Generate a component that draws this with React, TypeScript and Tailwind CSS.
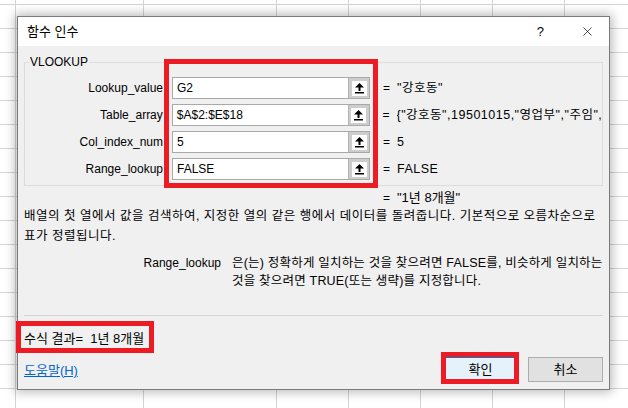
import { X } from 'lucide-react';

const COLS = ['w-[16px]', 'w-[128px]', 'w-[133px]', 'w-[72px]', 'w-[72px]', 'w-[72px]', 'w-[72px]', 'w-[72px]'];

const ARGS = [
  { name: 'Lookup_value', input: 'G2', value: '"강호동"' },
  { name: 'Table_array', input: '$A$2:$E$18', value: '{"강호동",19501015,"영업부","주임",' },
  { name: 'Col_index_num', input: '5', value: '5' },
  { name: 'Range_lookup', input: 'FALSE', value: 'FALSE' },
];

function SheetGrid() {
  return (
    <div className="flex flex-col">
      {Array.from({ length: 18 }).map((_, r) => (
        <div key={r} className={`flex shrink-0 ${r === 0 ? 'h-[5px]' : 'h-[24px]'}`}>
          {COLS.map((w, c) => (
            <div key={c} className={`${w} shrink-0 border-r border-b border-[#d4d4d4]`} />
          ))}
        </div>
      ))}
    </div>
  );
}

function CollapseButton() {
  return (
    <div className="w-[21px] h-full bg-[#cdcdcd] flex items-center justify-center border-l border-[#b4b4b4]">
      <div className="w-[15px] h-[15px] bg-white flex items-center justify-center">
        <svg width="11" height="12" viewBox="0 0 11 12">
          <polygon points="5.5,1 1,5.5 4.5,5.5 4.5,9 6.5,9 6.5,5.5 10,5.5" fill="#000" />
          <rect x="1" y="10" width="9" height="1.5" fill="#000" />
        </svg>
      </div>
    </div>
  );
}

function ArgRow({ name, input, value }: { name: string; input: string; value: string }) {
  return (
    <div className="flex items-center h-[22px]">
      <div className="w-[138px] text-right">{name}</div>
      <div className="ml-[9px] w-[198px] h-[22px] flex border border-[#a9a9a9] bg-white">
        <div className="flex-1 pl-[4px] leading-[20px]">{input}</div>
        <CollapseButton />
      </div>
      <div className="ml-[13px] w-[14px]">=</div>
      <div className="whitespace-nowrap overflow-hidden text-[12.5px] tracking-[0.5px]">{value}</div>
    </div>
  );
}

export default function App() {
  return (
    <div className="relative w-[628px] h-[408px] overflow-hidden bg-white text-[12px] text-black font-['Liberation_Sans','Noto_Sans_CJK_KR',sans-serif]">
      <SheetGrid />

      {/* dialog */}
      <div className="absolute left-[17px] top-[16px] w-[593px] h-[374px] flex flex-col border border-[#7a7a7a] bg-[#f0f0f0] shadow-[0_0_10px_2px_rgba(0,0,0,0.28)]">
        <div className="h-[29px] shrink-0 bg-white flex items-center pl-[9px]">
          <span className="text-[13px] leading-[16px]">함수 인수</span>
          <span className="ml-auto mr-[36px] text-[13px] leading-[16px]">?</span>
          <X size={15} strokeWidth={1.1} className="mr-[14px]" />
        </div>

        <div className="flex-1 flex flex-col px-[6px]">
          {/* group box */}
          <div className="relative mt-[16px] border border-[#dcdcdc] pt-[14px] pb-[5px]">
            <span className="absolute -top-[9px] left-[4px] px-[1px] bg-[#f0f0f0] leading-[16px]">VLOOKUP</span>
            <div className="flex flex-col gap-[5px]">
              {ARGS.map(a => <ArgRow key={a.name} {...a} />)}
            </div>
          </div>

          <div className="mt-[4px] flex leading-[16px] pl-[359px] text-[13px]">
            <span className="w-[14px] text-[12px]">=</span>
            <span>"1년 8개월"</span>
          </div>

          <p className="leading-[20px] text-[12.5px] tracking-[0.5px] whitespace-nowrap">
            배열의 첫 열에서 값을 검색하여, 지정한 열의 같은 행에서 데이터를 돌려줍니다. 기본적으로 오름차순으로
            <br />
            표가 정렬됩니다.
          </p>

          <div className="mt-[8px] flex leading-[18px]">
            <div className="w-[197px] text-right">Range_lookup</div>
            <p className="ml-[11px] text-[12.5px] tracking-[0.2px] whitespace-nowrap">
              은(는) 정확하게 일치하는 것을 찾으려면 FALSE를, 비슷하게 일치하는
              <br />
              것을 찾으려면 TRUE(또는 생략)를 지정합니다.
            </p>
          </div>

          <div className="mt-[25px] border-t border-[#d5d5d5]" />

          <div className="mt-[15px] leading-[16px] whitespace-pre text-[13px]">수식 결과=  1년 8개월</div>

          <div className="mt-[10px] flex items-center">
            <a className="text-[#0066cc] underline leading-[16px] pt-[2px] text-[13px]">도움말(H)</a>
            <div className="ml-auto flex gap-[10px] text-[13px]">
              <button className="w-[75px] h-[25px] bg-[#e5f1fb] border border-[#0078d7]">확인</button>
              <button className="w-[75px] h-[25px] bg-[#e1e1e1] border border-[#adadad]">취소</button>
            </div>
          </div>
        </div>
      </div>

      {/* red highlight boxes */}
      <div className="absolute left-[164px] top-[59px] w-[214px] h-[129px] border-[5px] border-[#ed1c24]" />
      <div className="absolute left-[16px] top-[321px] w-[138px] h-[32px] border-[5px] border-[#ed1c24]" />
      <div className="absolute left-[441px] top-[352px] w-[78px] h-[32px] border-[5px] border-[#ed1c24]" />
    </div>
  );
}
